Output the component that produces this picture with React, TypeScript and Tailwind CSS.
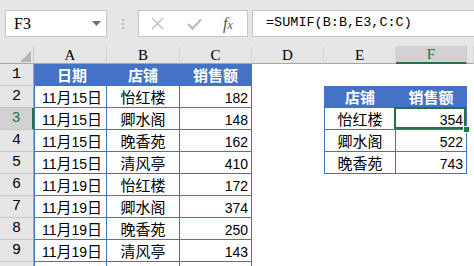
import React from 'react';

const CJK = /([\u4e00-\u9fff]+)/;

function Txt({ s, bold }: { s: string; bold?: boolean }) {
  const parts = s.split(CJK).filter((p) => p.length > 0);
  return (
    <span className="whitespace-nowrap">
      {parts.map((p, i) =>
        CJK.test(p) ? (
          <span
            key={i}
            className={`text-[15px] ${bold ? 'font-bold' : 'font-normal'}`}
            style={{ fontFamily: '"Noto Sans CJK SC", sans-serif' }}
          >
            {p}
          </span>
        ) : (
          <span
            key={i}
            className="text-[14px]"
            style={{ fontFamily: '"Liberation Sans", Arial, sans-serif' }}
          >
            {p}
          </span>
        )
      )}
    </span>
  );
}

const t1: string[][] = [
  ['日期', '店铺', '销售额'],
  ['11月15日', '怡红楼', '182'],
  ['11月15日', '卿水阁', '148'],
  ['11月15日', '晚香苑', '162'],
  ['11月15日', '清风亭', '410'],
  ['11月19日', '怡红楼', '172'],
  ['11月19日', '卿水阁', '374'],
  ['11月19日', '晚香苑', '250'],
  ['11月19日', '清风亭', '143'],
  ['', '', ''],
];

const t2: string[][] = [
  ['店铺', '销售额'],
  ['怡红楼', '354'],
  ['卿水阁', '522'],
  ['晚香苑', '743'],
];

const mono = { fontFamily: '"Liberation Mono", "DejaVu Sans Mono", monospace' };
const serif = { fontFamily: '"Liberation Serif", "DejaVu Serif", serif' };

export default function App() {
  const cols = ['A', 'B', 'C', 'D', 'E', 'F', 'G'];
  const cells: React.ReactNode[] = [];

  cells.push(
    <div key="corner" className="relative bg-[#e6e6e6] border-r border-b border-r-[#c8c8c8] border-b-[#a6a6a6]">
      <svg className="absolute left-[20px] top-[5px]" width="11" height="11" viewBox="0 0 11 11">
        <polygon points="11,0 11,11 0,11" fill="#b4b4b4" />
      </svg>
    </div>
  );
  cols.forEach((c) => {
    if (c === 'F') {
      cells.push(
        <div
          key={'h' + c}
          className="flex items-center justify-center pt-[1px] bg-[#d2d2d2] border-r border-r-[#c8c8c8] border-b-2 border-b-[#217346] text-[15px] text-[#217346]"
          style={serif}
        >
          {c}
        </div>
      );
    } else {
      cells.push(
        <div
          key={'h' + c}
          className="flex items-center justify-center pt-[1px] bg-[#e6e6e6] border-r border-b border-r-[#d4d4d4] border-b-[#a6a6a6] text-[15px] text-black"
          style={serif}
        >
          {c === 'G' ? '' : c}
        </div>
      );
    }
  });

  for (let r = 1; r <= 10; r++) {
    const sel = r === 3;
    cells.push(
      <div
        key={'r' + r}
        className={
          sel
            ? 'flex items-center justify-center pt-[2px] bg-[#d2d2d2] border-r-2 border-r-[#217346] border-b border-b-[#c8c8c8] text-[15px] text-[#217346]'
            : 'flex items-center justify-center pt-[2px] bg-[#e6e6e6] border-r border-r-[#a6a6a6] border-b border-b-[#c8c8c8] text-[15px] text-black'
        }
        style={mono}
      >
        {r === 10 ? '' : r}
      </div>
    );
    const row = t1[r - 1];
    cells.push(
      <div
        key={'a' + r}
        className={
          r === 1
            ? 'flex items-center justify-center pl-[3px] bg-[#4472c4] border-l border-r border-b border-[#4472c4] text-white'
            : 'flex items-center justify-center pl-[3px] pt-[1px] bg-white border-l border-r border-b border-[#4472c4] text-black'
        }
      >
        <Txt s={row[0]} bold={r === 1} />
      </div>
    );
    cells.push(
      <div
        key={'b' + r}
        className={
          r === 1
            ? 'flex items-center justify-center bg-[#4472c4] border-r border-b border-[#4472c4] text-white'
            : 'flex items-center justify-center pt-[1px] bg-white border-r border-b border-[#4472c4] text-black'
        }
      >
        <Txt s={row[1]} bold={r === 1} />
      </div>
    );
    cells.push(
      <div
        key={'c' + r}
        className={
          r === 1
            ? 'flex items-center justify-center bg-[#4472c4] border-r border-b border-[#4472c4] text-white'
            : 'flex items-center justify-end pr-[3px] pt-[1px] bg-white border-r border-b border-[#4472c4] text-black'
        }
      >
        <Txt s={row[2]} bold={r === 1} />
      </div>
    );
    cells.push(<div key={'d' + r} className="bg-white" />);
    if (r >= 2 && r <= 5) {
      const tr = t2[r - 2];
      const head = r === 2;
      cells.push(
        <div
          key={'e' + r}
          className={
            head
              ? 'flex items-center justify-center bg-[#4472c4] border-l border-r border-b border-[#4472c4] text-white'
              : 'flex items-center justify-center pt-[1px] bg-white border-l border-r border-b border-[#4472c4] text-black'
          }
        >
          <Txt s={tr[0]} bold={head} />
        </div>
      );
      cells.push(
        <div
          key={'f' + r}
          className={
            head
              ? 'relative flex items-center justify-center bg-[#4472c4] border-r border-b border-[#4472c4] text-white'
              : 'relative flex items-center justify-end pr-[3px] pt-[1px] bg-white border-r border-b border-[#4472c4] text-black'
          }
        >
          <Txt s={tr[1]} bold={head} />
          {r === 3 && (
            <>
              <div className="absolute z-10 top-[-1px] left-[-2px] right-0 bottom-0 border-2 border-[#217346]" />
              <div className="absolute z-20 right-[-4px] bottom-[-4px] w-[7px] h-[7px] bg-[#217346] border border-white" />
            </>
          )}
        </div>
      );
    } else {
      cells.push(<div key={'e' + r} className="bg-white" />);
      cells.push(<div key={'f' + r} className="bg-white" />);
    }
    cells.push(<div key={'g' + r} className="bg-white" />);
  }

  return (
    <div className="w-[474px] h-[266px] overflow-hidden bg-[#e6e6e6] flex flex-col">
      <div className="h-[46px] shrink-0 flex items-start pt-[10px]">
        <div className="ml-[5px] w-[102px] h-[27px] bg-white border border-[#c6c6c6] flex items-center justify-between pl-[8px] pr-[5px]">
          <span className="text-[16px] text-black" style={serif}>
            F3
          </span>
          <svg width="9" height="5" viewBox="0 0 9 5">
            <polygon points="0,0 9,0 4.5,5" fill="#6e6e6e" />
          </svg>
        </div>
        <div className="w-[31px] h-[27px] flex flex-col items-center justify-center gap-[2px]">
          <div className="w-[2px] h-[2px] bg-[#b5b5b5]" />
          <div className="w-[2px] h-[2px] bg-[#b5b5b5]" />
          <div className="w-[2px] h-[2px] bg-[#b5b5b5]" />
        </div>
        <div className="w-[110px] h-[27px] bg-white border border-[#c6c6c6] flex items-center pl-[12px]">
          <svg width="13" height="13" viewBox="0 0 13 13">
            <path d="M1 1 L12 12 M12 1 L1 12" stroke="#bdbdbd" strokeWidth="1.4" fill="none" />
          </svg>
          <svg className="ml-[23px]" width="15" height="12" viewBox="0 0 15 12">
            <path d="M1 6 L5.5 10.5 L14 1.5" stroke="#bdbdbd" strokeWidth="2.4" fill="none" />
          </svg>
          <span
            className="ml-[21px] text-[16px] italic text-[#555] leading-none"
            style={{ fontFamily: '"Liberation Serif", serif' }}
          >
            f<span className="text-[12px]">x</span>
          </span>
        </div>
        <div className="ml-[4px] flex-1 h-[27px] bg-white border border-[#c6c6c6] border-r-0 flex items-center pl-[13px]">
          <span className="text-[13.5px] text-black" style={mono}>
            =SUMIF(B:B,E3,C:C)
          </span>
        </div>
      </div>
      <div
        className="grid bg-white"
        style={{
          gridTemplateColumns: '34px 73px 73px 72px 72px 72px 71px 7px',
          gridTemplateRows: '18px repeat(10, 22px)',
        }}
      >
        {cells}
      </div>
    </div>
  );
}
